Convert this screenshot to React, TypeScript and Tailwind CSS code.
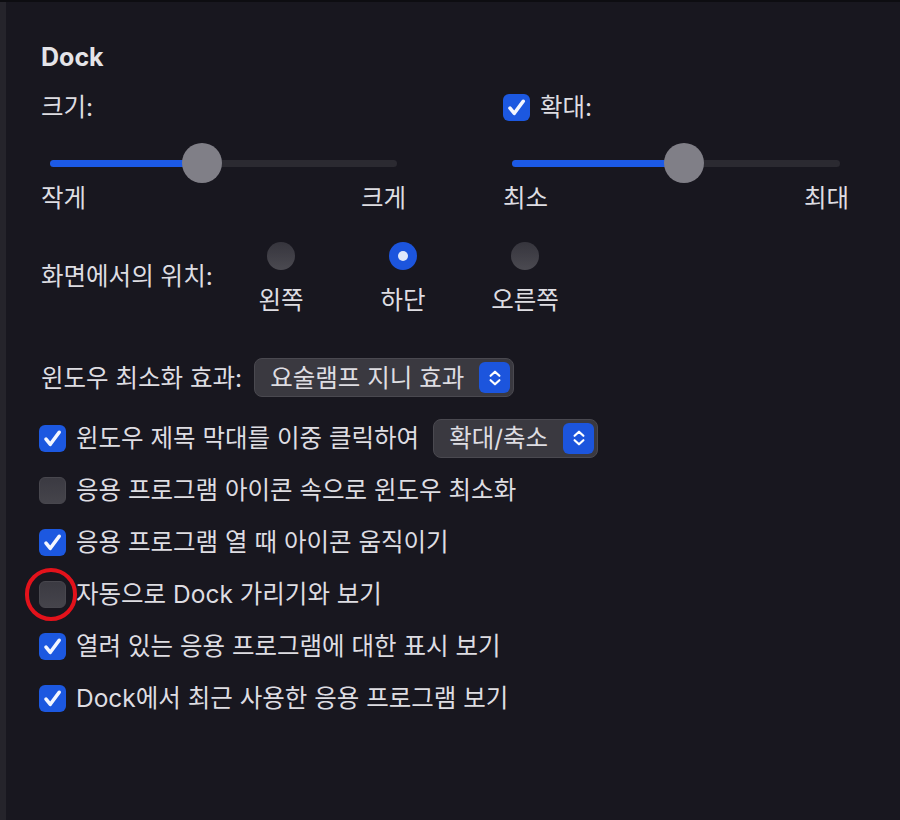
import React from "react";

const FONT = { fontFamily: '"Inter", "Noto Sans CJK KR", "Noto Sans", sans-serif' };

function Check({ on }: { on: boolean }) {
  if (!on)
    return (
      <span className="block h-[27px] w-[27px] shrink-0 rounded-[6px] border border-[#48474e] bg-gradient-to-b from-[#3b3a42] to-[#45444b]" />
    );
  return (
    <span className="flex h-[27px] w-[27px] shrink-0 items-center justify-center rounded-[6px] bg-[#1c58e0]">
      <svg viewBox="0 0 27 27" className="h-[27px] w-[27px]">
        <path
          d="M7 14.2 L11.3 19.3 L20.2 7.3"
          fill="none"
          stroke="#f3f6ff"
          strokeWidth="3.6"
          strokeLinecap="round"
          strokeLinejoin="round"
        />
      </svg>
    </span>
  );
}

function Stepper() {
  return (
    <span className="flex h-[31px] w-[31px] items-center justify-center rounded-[6px] bg-[#1c55dd]">
      <svg viewBox="0 0 20 20" className="h-[22px] w-[22px]">
        <path d="M6 8 L10 4.3 L14 8 M6 12 L10 15.7 L14 12" fill="none" stroke="#ffffff" strokeWidth="2" strokeLinecap="round" strokeLinejoin="round" />
      </svg>
    </span>
  );
}

function Popup({ label }: { label: string }) {
  return (
    <div className="flex h-[39px] items-center gap-[15px] rounded-[8px] border border-[#4a4950] bg-[#3a3940] pl-[15px] pr-[3px]">
      <span>{label}</span>
      <Stepper />
    </div>
  );
}

function Slider({ pct, min, max }: { pct: number; min: string; max: string }) {
  return (
    <div className="flex flex-col">
      <div className="relative mx-[9px] mt-[21px] flex h-[40px] items-center">
        <div className="h-[7px] w-full rounded-full bg-[#2b2a31]">
          <div className="h-full rounded-full bg-[#1c5ae6]" style={{ width: `${pct}%` }} />
        </div>
        <div
          className="absolute top-0 h-[40px] w-[40px] -translate-x-1/2 rounded-full bg-[#807f87]"
          style={{ left: `${pct}%` }}
        />
      </div>
      <div className="flex h-[30px] justify-between">
        <span>{min}</span>
        <span>{max}</span>
      </div>
    </div>
  );
}

function Radio({ on, label }: { on: boolean; label: string }) {
  return (
    <div className="flex w-[122px] flex-col items-center">
      {on ? (
        <span className="flex h-[28px] w-[28px] items-center justify-center rounded-full bg-[#1c55dd]">
          <span className="h-[10px] w-[10px] rounded-full bg-[#dfe8fb]" />
        </span>
      ) : (
        <span className="h-[28px] w-[28px] rounded-full bg-gradient-to-b from-[#36353d] to-[#4b4a51]" />
      )}
      <span className="mt-[15px] h-[30px]">{label}</span>
    </div>
  );
}

const rows: { on: boolean; text: string; popup?: string; mark?: boolean }[] = [
  { on: true, text: "윈도우 제목 막대를 이중 클릭하여", popup: "확대/축소" },
  { on: false, text: "응용 프로그램 아이콘 속으로 윈도우 최소화" },
  { on: true, text: "응용 프로그램 열 때 아이콘 움직이기" },
  { on: false, text: "자동으로 Dock 가리기와 보기", mark: true },
  { on: true, text: "열려 있는 응용 프로그램에 대한 표시 보기" },
  { on: true, text: "Dock에서 최근 사용한 응용 프로그램 보기" },
];

export default function App() {
  return (
    <div
      className="flex h-[820px] w-[900px] overflow-hidden border-t-2 border-[#0d0d11] bg-[#18171f] text-[24.5px] leading-[30px] text-[#dedde2]"
      style={FONT}
    >
      <div className="w-[6px] shrink-0 bg-[#25242b]" />
      <div className="flex flex-1 flex-col pl-[35px] pt-[40px]">
        <div className="h-[30px] text-[25px] font-bold text-[#e4e4e8]">Dock</div>

        <div className="mt-[20px] flex">
          <div className="w-[365px]">
            <div className="h-[30px]">크기:</div>
            <Slider pct={43.8} min="작게" max="크게" />
          </div>
          <div className="ml-[97px] w-[346px]">
            <div className="flex h-[30px] items-center gap-[10px]">
              <Check on />
              <span>확대:</span>
            </div>
            <Slider pct={52.3} min="최소" max="최대" />
          </div>
        </div>

        <div className="mt-[29px] flex">
          <div className="mt-[19px] w-[179px]">화면에서의 위치:</div>
          <Radio on={false} label="왼쪽" />
          <Radio on label="하단" />
          <Radio on={false} label="오른쪽" />
        </div>

        <div className="mt-[43px] flex items-center gap-[12px]">
          <span>윈도우 최소화 효과:</span>
          <Popup label="요술램프 지니 효과" />
        </div>

        <div className="mt-[15px] -ml-[2px] flex flex-col">
          {rows.map((r) => (
            <div key={r.text} className="flex h-[52px] items-center gap-[10px]">
              <span className="relative">
                <Check on={r.on} />
                {r.mark && (
                  <span className="absolute -left-[14px] -top-[13px] h-[53px] w-[52px] rounded-full border-[4px] border-[#e3121b]" />
                )}
              </span>
              <span>{r.text}</span>
              {r.popup && (
                <span className="ml-[4px]">
                  <Popup label={r.popup} />
                </span>
              )}
            </div>
          ))}
        </div>
      </div>
    </div>
  );
}
